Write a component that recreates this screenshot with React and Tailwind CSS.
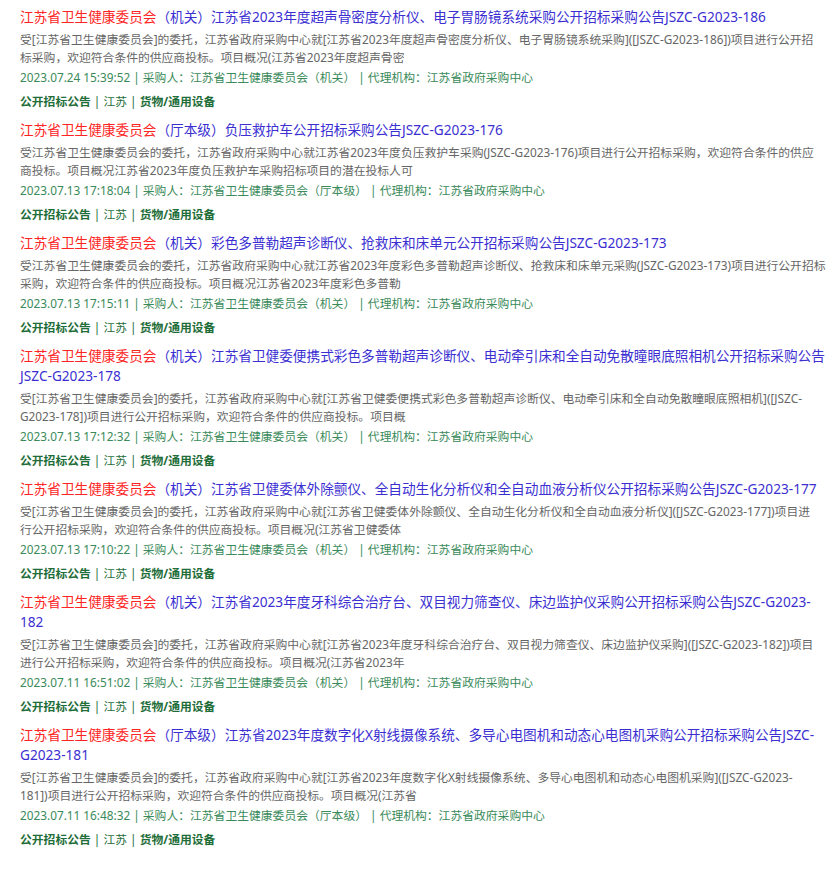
const notices = [
    {
        org: "江苏省卫生健康委员会",
        level: "（机关）",
        title: [
            "江苏省2023年度超声骨密度分析仪、电子胃肠镜系统采购公开招标采购公告JSZC-G2023-186",
        ],
        summary: [
            "受[江苏省卫生健康委员会]的委托，江苏省政府采购中心就[江苏省2023年度超声骨密度分析仪、电子胃肠镜系统采购]([JSZC-G2023-186])项目进行公开招",
            "标采购，欢迎符合条件的供应商投标。项目概况(江苏省2023年度超声骨密",
        ],
        time: "2023.07.24 15:39:52",
    },
    {
        org: "江苏省卫生健康委员会",
        level: "（厅本级）",
        title: ["负压救护车公开招标采购公告JSZC-G2023-176"],
        summary: [
            "受江苏省卫生健康委员会的委托，江苏省政府采购中心就江苏省2023年度负压救护车采购(JSZC-G2023-176)项目进行公开招标采购，欢迎符合条件的供应",
            "商投标。项目概况江苏省2023年度负压救护车采购招标项目的潜在投标人可",
        ],
        time: "2023.07.13 17:18:04",
    },
    {
        org: "江苏省卫生健康委员会",
        level: "（机关）",
        title: ["彩色多普勒超声诊断仪、抢救床和床单元公开招标采购公告JSZC-G2023-173"],
        summary: [
            "受江苏省卫生健康委员会的委托，江苏省政府采购中心就江苏省2023年度彩色多普勒超声诊断仪、抢救床和床单元采购(JSZC-G2023-173)项目进行公开招标",
            "采购，欢迎符合条件的供应商投标。项目概况江苏省2023年度彩色多普勒",
        ],
        time: "2023.07.13 17:15:11",
    },
    {
        org: "江苏省卫生健康委员会",
        level: "（机关）",
        title: [
            "江苏省卫健委便携式彩色多普勒超声诊断仪、电动牵引床和全自动免散瞳眼底照相机公开招标采购公告",
            "JSZC-G2023-178",
        ],
        summary: [
            "受[江苏省卫生健康委员会]的委托，江苏省政府采购中心就[江苏省卫健委便携式彩色多普勒超声诊断仪、电动牵引床和全自动免散瞳眼底照相机]([JSZC-",
            "G2023-178])项目进行公开招标采购，欢迎符合条件的供应商投标。项目概",
        ],
        time: "2023.07.13 17:12:32",
    },
    {
        org: "江苏省卫生健康委员会",
        level: "（机关）",
        title: [
            "江苏省卫健委体外除颤仪、全自动生化分析仪和全自动血液分析仪公开招标采购公告JSZC-G2023-177",
        ],
        summary: [
            "受[江苏省卫生健康委员会]的委托，江苏省政府采购中心就[江苏省卫健委体外除颤仪、全自动生化分析仪和全自动血液分析仪]([JSZC-G2023-177])项目进",
            "行公开招标采购，欢迎符合条件的供应商投标。项目概况(江苏省卫健委体",
        ],
        time: "2023.07.13 17:10:22",
    },
    {
        org: "江苏省卫生健康委员会",
        level: "（机关）",
        title: [
            "江苏省2023年度牙科综合治疗台、双目视力筛查仪、床边监护仪采购公开招标采购公告JSZC-G2023-",
            "182",
        ],
        summary: [
            "受[江苏省卫生健康委员会]的委托，江苏省政府采购中心就[江苏省2023年度牙科综合治疗台、双目视力筛查仪、床边监护仪采购]([JSZC-G2023-182])项目",
            "进行公开招标采购，欢迎符合条件的供应商投标。项目概况(江苏省2023年",
        ],
        time: "2023.07.11 16:51:02",
    },
    {
        org: "江苏省卫生健康委员会",
        level: "（厅本级）",
        title: [
            "江苏省2023年度数字化X射线摄像系统、多导心电图机和动态心电图机采购公开招标采购公告JSZC-",
            "G2023-181",
        ],
        summary: [
            "受[江苏省卫生健康委员会]的委托，江苏省政府采购中心就[江苏省2023年度数字化X射线摄像系统、多导心电图机和动态心电图机采购]([JSZC-G2023-",
            "181])项目进行公开招标采购，欢迎符合条件的供应商投标。项目概况(江苏省",
        ],
        time: "2023.07.11 16:48:32",
    },
];

export default function App() {
    return (
        <div
            className="min-h-[879px] overflow-hidden bg-white pl-5 pt-[7px]"
            style={{ fontFamily: '"Noto Sans", "Noto Sans CJK SC", sans-serif' }}
        >
            {notices.map((n, i) => (
                <div key={i} className="pb-[9px]">
                    <a href="#" className="block text-[13.65px] leading-[20px] text-[#3b2fd2]">
                        {n.title.map((line, j) => (
                            <span key={j} className="block whitespace-nowrap">
                                {j === 0 && (
                                    <>
                                        <span className="text-[#ff2424]">{n.org}</span>
                                        {n.level}
                                    </>
                                )}
                                {line}
                            </span>
                        ))}
                    </a>
                    <p className="mt-[3px] text-[11.8px] leading-[18px] text-[#666666]">
                        {n.summary.map((line, j) => (
                            <span key={j} className="block whitespace-nowrap">
                                {line}
                            </span>
                        ))}
                    </p>
                    <p className="mt-px whitespace-nowrap text-[11.8px] leading-[20px] text-[#3a8a5a]">
                        {n.time} | 采购人：{n.org}
                        {n.level} | 代理机构：江苏省政府采购中心
                    </p>
                    <p className="mt-1 whitespace-nowrap text-[11.8px] leading-[20px] text-[#1f6e3a]">
                        <b>公开招标公告</b> | 江苏 | <b>货物/通用设备</b>
                    </p>
                </div>
            ))}
        </div>
    );
}
